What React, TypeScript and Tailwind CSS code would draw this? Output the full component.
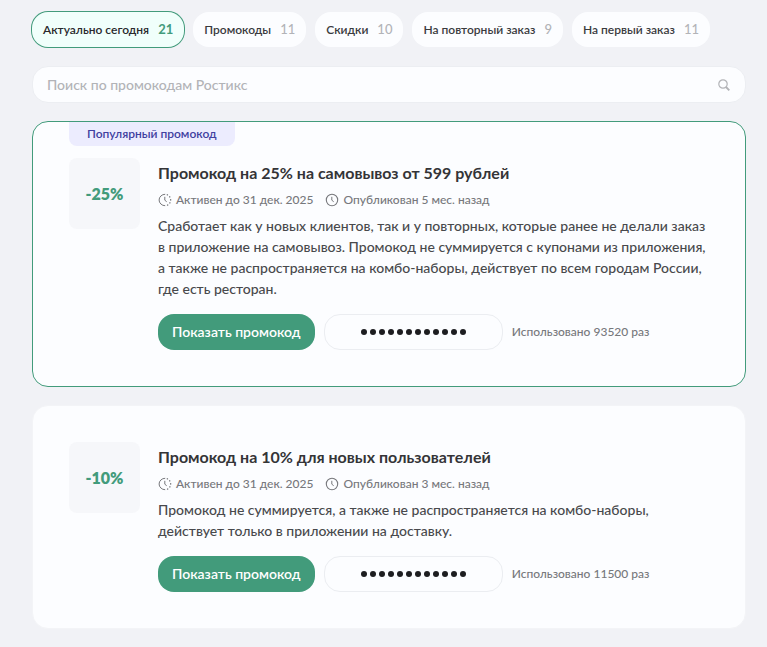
import { useState } from "react";
import clsx from "clsx";

interface Filter {
  label: string;
  count: number;
}

interface Promo {
  id: string;
  discount: string;
  title: string;
  expires: string;
  published: string;
  description: string;
  used: number;
  popular?: boolean;
}

const filters: Filter[] = [
  { label: "Актуально сегодня", count: 21 },
  { label: "Промокоды", count: 11 },
  { label: "Скидки", count: 10 },
  { label: "На повторный заказ", count: 9 },
  { label: "На первый заказ", count: 11 },
];

const promos: Promo[] = [
  {
    id: "pickup-25",
    discount: "-25%",
    title: "Промокод на 25% на самовывоз от 599 рублей",
    expires: "Активен до 31 дек. 2025",
    published: "Опубликован 5 мес. назад",
    description:
      "Сработает как у новых клиентов, так и у повторных, которые ранее не делали заказ в приложение на самовывоз. Промокод не суммируется с купонами из приложения, а также не распространяется на комбо-наборы, действует по всем городам России, где есть ресторан.",
    used: 93520,
    popular: true,
  },
  {
    id: "new-10",
    discount: "-10%",
    title: "Промокод на 10% для новых пользователей",
    expires: "Активен до 31 дек. 2025",
    published: "Опубликован 3 мес. назад",
    description:
      "Промокод не суммируется, а также не распространяется на комбо-наборы, действует только в приложении на доставку.",
    used: 11500,
  },
];

const ExpiresIcon = () => (
  <svg className="size-3.5 shrink-0" viewBox="0 0 14 14" fill="none" stroke="currentColor" strokeLinecap="round" aria-hidden="true">
    <path d="M6.8 1.3a5.7 5.7 0 0 0 0 11.4" />
    <path d="M9.3 1.8A5.7 5.7 0 0 1 9.3 12.2" strokeWidth="1.4" strokeDasharray="0.2 2.9" />
    <path d="M6.8 4.2v3l1.6 1.3" strokeLinejoin="round" />
  </svg>
);

const ClockIcon = () => (
  <svg className="size-3.5 shrink-0" viewBox="0 0 14 14" fill="none" stroke="currentColor" strokeLinecap="round" aria-hidden="true">
    <circle cx="7" cy="7" r="5.7" strokeWidth="1.1" />
    <path d="M6.8 4.2v3l1.6 1.3" strokeLinejoin="round" />
  </svg>
);

const SearchIcon = () => (
  <svg className="size-3 shrink-0" viewBox="0 0 12 12" fill="none" stroke="currentColor" strokeWidth="1.2" aria-hidden="true">
    <circle cx="5" cy="5" r="4.2" />
    <path d="M8 8l3.3 3.3" strokeWidth="1.9" />
  </svg>
);

const HiddenCode = () => (
  <div className="flex h-9 w-[179px] items-center justify-center gap-[3px] rounded-2xl border border-[#ebedf1]">
    {Array.from({ length: 12 }, (_, i) => (
      <span key={i} className="size-1.5 rounded-full bg-[#1d1d20]" />
    ))}
  </div>
);

const PromoCard = ({ promo }: { promo: Promo }) => (
  <article
    className={clsx(
      "relative flex gap-[18px] rounded-2xl border bg-[#fcfdff] p-9",
      promo.popular ? "border-[#429b7b]" : "border-[#f3f4f7]"
    )}
  >
    {promo.popular && (
      <div className="absolute top-0 left-9 h-6 rounded-b-lg bg-[#ececfe] px-[18px] text-xs leading-6 font-semibold text-[#4040a0]">
        Популярный промокод
      </div>
    )}
    <div className="flex size-[71px] shrink-0 items-center justify-center rounded-lg bg-[#f6f7fa] text-base font-extrabold text-[#429b7b]">
      {promo.discount}
    </div>
    <div className="min-w-0 flex-1">
      <h2 className="text-base leading-[30px] font-bold text-[#343437]">{promo.title}</h2>
      <div className="mt-0.5 flex flex-wrap gap-x-3 text-xs leading-5 font-medium text-[#77787c]">
        <span className="flex items-center gap-1">
          <ExpiresIcon />
          {promo.expires}
        </span>
        <span className="flex items-center gap-1">
          <ClockIcon />
          {promo.published}
        </span>
      </div>
      <p className="mt-[5px] text-sm leading-[21px] font-medium text-[#48494c]">{promo.description}</p>
      <div className="mt-[15px] flex flex-wrap items-center gap-[9px]">
        <button
          type="button"
          className="h-9 cursor-pointer rounded-2xl bg-[#429b7b] px-3.5 text-sm font-semibold text-white"
        >
          Показать промокод
        </button>
        <HiddenCode />
        <span className="text-xs font-medium text-[#77787c]">Использовано {promo.used} раз</span>
      </div>
    </div>
  </article>
);

const App = () => {
  const [active, setActive] = useState(0);
  const [query, setQuery] = useState("");

  return (
    <main className="min-h-screen bg-[#f1f2f6] pt-[11px] pr-[21px] pb-[18px] pl-8 font-['Lato','Open_Sans',sans-serif]">
      <div className="flex flex-wrap gap-[9px]">
        {filters.map((filter, i) => (
          <button
            key={filter.label}
            type="button"
            aria-pressed={i === active}
            onClick={() => setActive(i)}
            className={clsx(
              "my-px flex h-[35px] cursor-pointer items-center gap-[9px] rounded-2xl px-[11px] text-xs font-semibold",
              i === active
                ? "bg-[#f0fffb] text-[#29292c] ring-1 ring-[#429b7b]"
                : "bg-[#fcfdff] text-[#3a3b3e]"
            )}
          >
            {filter.label}
            <span
              className={clsx(
                "text-[13px]",
                i === active ? "font-bold text-[#429b7b]" : "font-medium text-[#b2b3b7]"
              )}
            >
              {filter.count}
            </span>
          </button>
        ))}
      </div>

      <label className="mt-[18px] flex h-[37px] items-center rounded-2xl border border-[#eceef2] bg-[#fcfdff] pr-[15px] pl-3.5 text-[#b2b3b7]">
        <input
          type="text"
          aria-label="Поиск по промокодам Ростикс"
          placeholder="Поиск по промокодам Ростикс"
          value={query}
          onChange={(e) => setQuery(e.target.value)}
          className="min-w-0 flex-1 bg-transparent text-sm font-medium text-[#29292c] outline-none placeholder:text-[#b2b3b7]"
        />
        <SearchIcon />
      </label>

      <section className="mt-[18px] flex flex-col gap-[18px]">
        {promos.map((promo) => (
          <PromoCard key={promo.id} promo={promo} />
        ))}
      </section>
    </main>
  );
};

export default App;
